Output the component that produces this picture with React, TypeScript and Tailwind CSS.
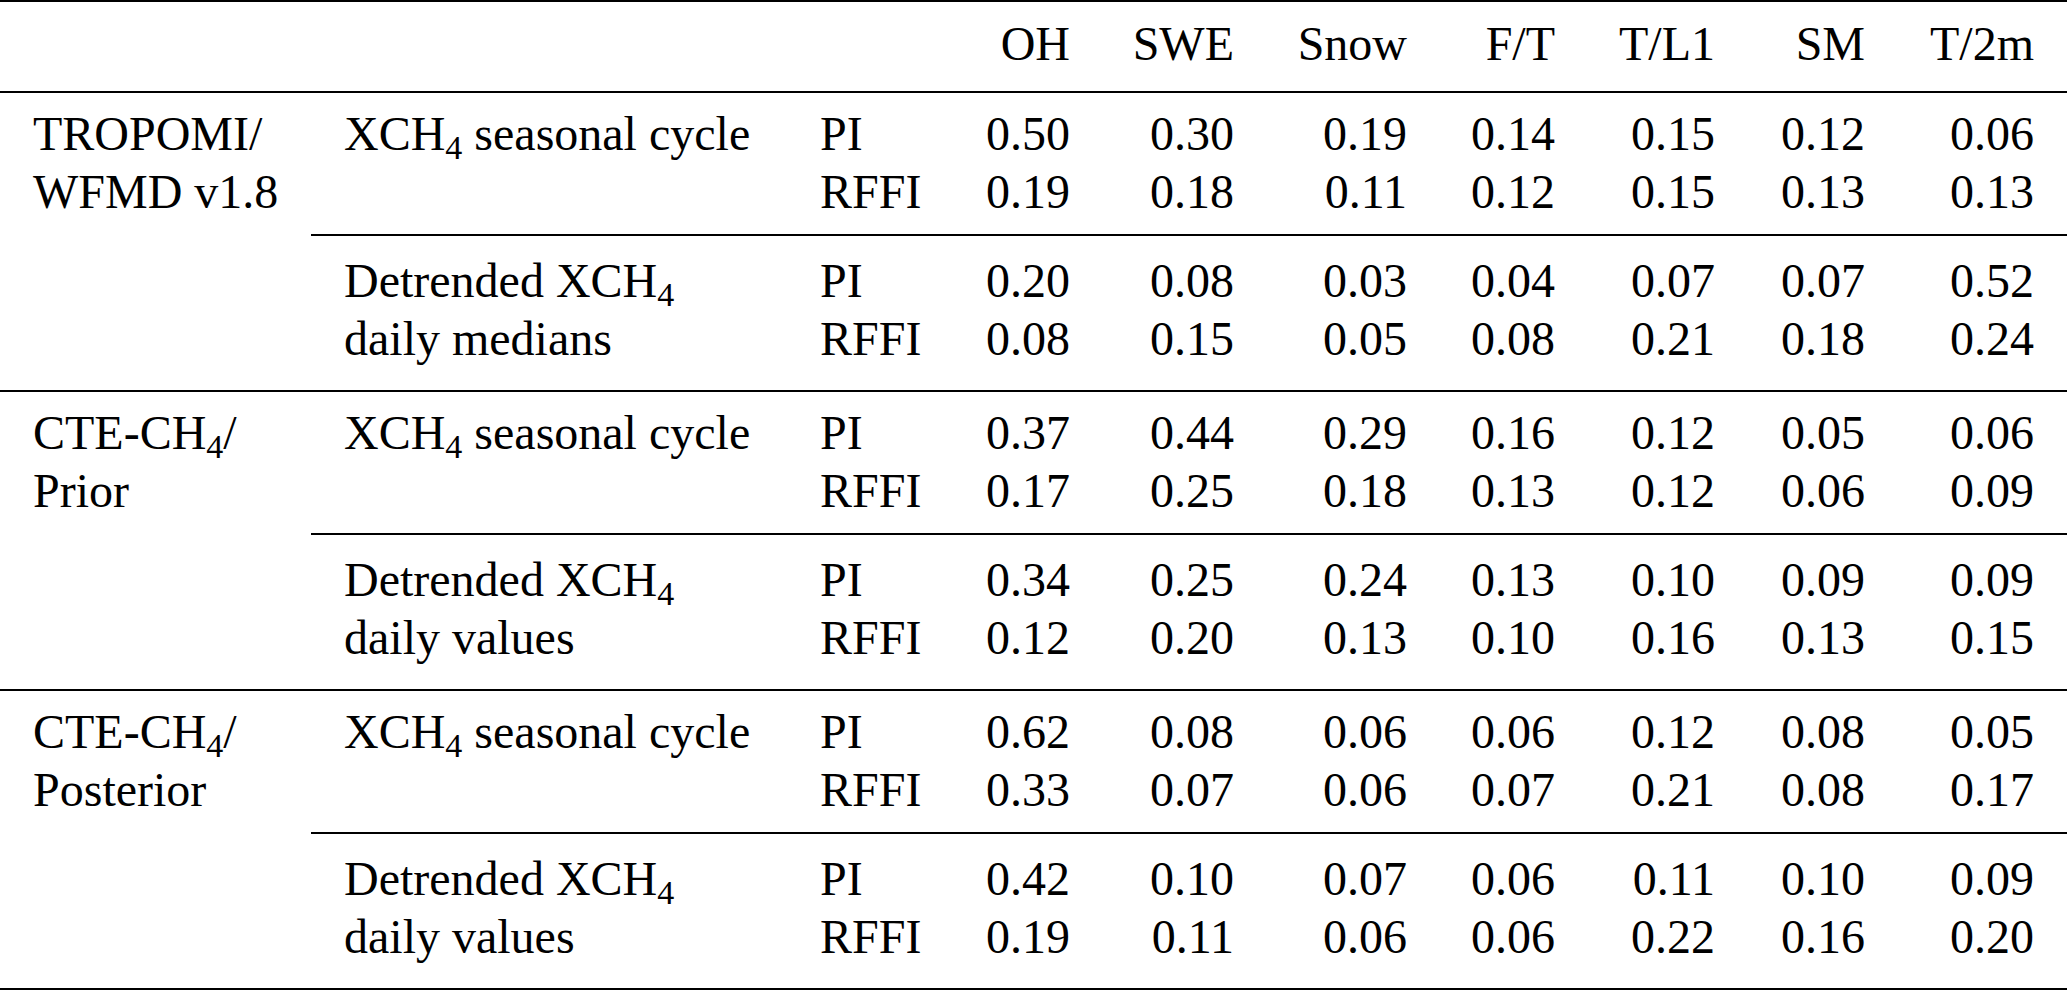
import type { ReactNode } from "react";

type Block = {
  label: ReactNode;
  pi: string[];
  rffi: string[];
};

type Group = {
  name: ReactNode;
  blocks: Block[];
};

const Sub = ({ children }: { children: ReactNode }) => (
  <sub className="text-[34px]">{children}</sub>
);

const XCH4 = (
  <>
    XCH<Sub>4</Sub>
  </>
);

const seasonal = <>{XCH4} seasonal cycle</>;

const detrended = (second: string) => (
  <>
    Detrended {XCH4}
    <br />
    {second}
  </>
);

const cteName = (second: string) => (
  <>
    CTE-CH<Sub>4</Sub>/
    <br />
    {second}
  </>
);

const headers = ["OH", "SWE", "Snow", "F/T", "T/L1", "SM", "T/2m"];

const groups: Group[] = [
  {
    name: (
      <>
        TROPOMI/
        <br />
        WFMD v1.8
      </>
    ),
    blocks: [
      {
        label: seasonal,
        pi: ["0.50", "0.30", "0.19", "0.14", "0.15", "0.12", "0.06"],
        rffi: ["0.19", "0.18", "0.11", "0.12", "0.15", "0.13", "0.13"],
      },
      {
        label: detrended("daily medians"),
        pi: ["0.20", "0.08", "0.03", "0.04", "0.07", "0.07", "0.52"],
        rffi: ["0.08", "0.15", "0.05", "0.08", "0.21", "0.18", "0.24"],
      },
    ],
  },
  {
    name: cteName("Prior"),
    blocks: [
      {
        label: seasonal,
        pi: ["0.37", "0.44", "0.29", "0.16", "0.12", "0.05", "0.06"],
        rffi: ["0.17", "0.25", "0.18", "0.13", "0.12", "0.06", "0.09"],
      },
      {
        label: detrended("daily values"),
        pi: ["0.34", "0.25", "0.24", "0.13", "0.10", "0.09", "0.09"],
        rffi: ["0.12", "0.20", "0.13", "0.10", "0.16", "0.13", "0.15"],
      },
    ],
  },
  {
    name: cteName("Posterior"),
    blocks: [
      {
        label: seasonal,
        pi: ["0.62", "0.08", "0.06", "0.06", "0.12", "0.08", "0.05"],
        rffi: ["0.33", "0.07", "0.06", "0.07", "0.21", "0.08", "0.17"],
      },
      {
        label: detrended("daily values"),
        pi: ["0.42", "0.10", "0.07", "0.06", "0.11", "0.10", "0.09"],
        rffi: ["0.19", "0.11", "0.06", "0.06", "0.22", "0.16", "0.20"],
      },
    ],
  },
];

function BlockRows({ block, first }: { block: Block; first: boolean }) {
  return (
    <div
      className={
        first
          ? "grid grid-cols-[476px_167px_149px_164px_173px_148px_160px_150px_169px] pt-[12px] pb-[13px]"
          : "grid grid-cols-[476px_167px_149px_164px_173px_148px_160px_150px_169px] border-t-2 border-black pt-[16px] pb-[22px]"
      }
    >
      <div className="pl-[33px] whitespace-nowrap">{block.label}</div>
      <div className="pl-[33px]">
        <div>PI</div>
        <div>RFFI</div>
      </div>
      {block.pi.map((v, i) => (
        <div key={i} className="pr-[33px] text-right">
          <div>{v}</div>
          <div>{block.rffi[i]}</div>
        </div>
      ))}
    </div>
  );
}

export default function App() {
  return (
    <div className="w-[2067px] bg-white font-['Liberation_Serif',serif] text-[48px] leading-[58px] text-black">
      {/* header */}
      <div className="grid grid-cols-[311px_476px_167px_149px_164px_173px_148px_160px_150px_169px] border-t-2 border-b-2 border-black pt-[13px] pb-[18px]">
        <div />
        <div />
        <div />
        {headers.map((h) => (
          <div key={h} className="pr-[33px] text-right">
            {h}
          </div>
        ))}
      </div>

      {groups.map((g, gi) => (
        <div
          key={gi}
          className={gi < groups.length - 1 ? "flex border-b-2 border-black" : "flex border-b-2 border-black"}
        >
          <div className="w-[311px] shrink-0 pl-[33px] pt-[12px] whitespace-nowrap">{g.name}</div>
          <div className="flex-1">
            {g.blocks.map((b, bi) => (
              <BlockRows key={bi} block={b} first={bi === 0} />
            ))}
          </div>
        </div>
      ))}
    </div>
  );
}
